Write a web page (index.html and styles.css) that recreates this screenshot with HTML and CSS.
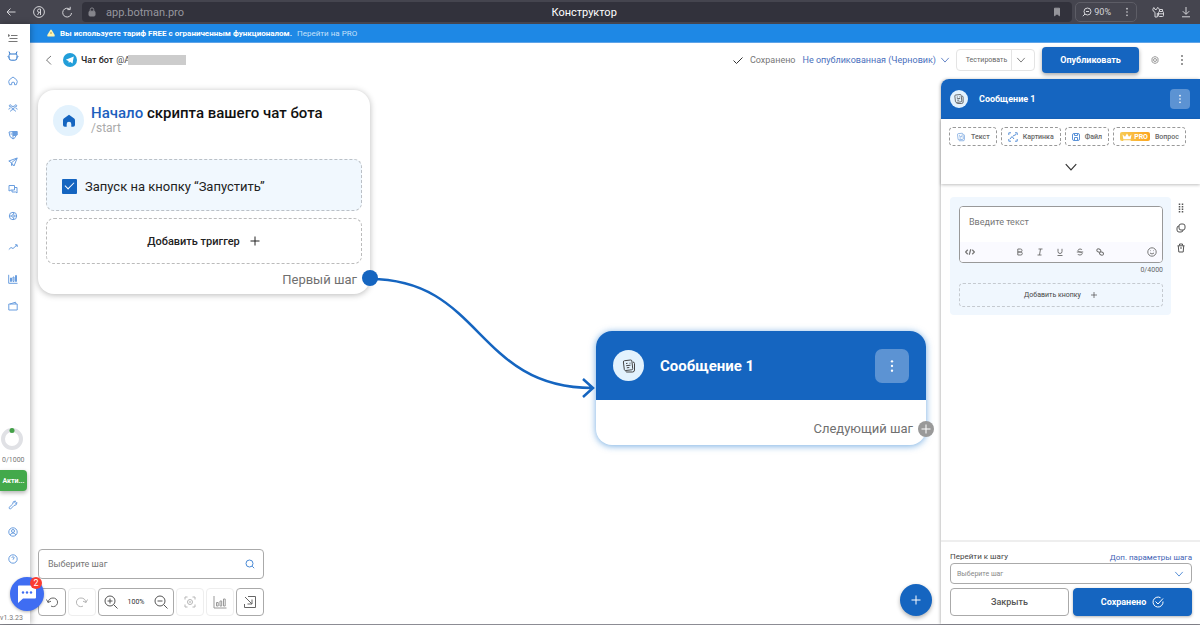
FILE: index.html
```html
<!DOCTYPE html>
<html lang="ru">
<head>
<meta charset="utf-8">
<title>Конструктор</title>
<link rel="stylesheet" href="styles.css">
</head>
<body>
<svg class="sprite" aria-hidden="true">
  <symbol id="i-down" viewBox="0 0 12 12"><path d="M1.500 3.500 6 8.500l4.500-5"/></symbol>
  <symbol id="i-dots" viewBox="0 0 12 12"><g fill="currentColor" stroke="none"><circle cx="6" cy="2" r="1"/><circle cx="6" cy="6" r="1"/><circle cx="6" cy="10" r="1"/></g></symbol>
  <symbol id="i-plus" viewBox="0 0 12 12"><path d="M6 1.500v9M1.500 6h9"/></symbol>
  <symbol id="i-doc" viewBox="0 0 16 16"><path d="M3.500 2.700 9.500 2q1.200-.1 1.400 1l.8 7.500q.1 1.200-1 1.300l-6 .7q-1.200.1-1.400-1L2.400 4q-.1-1.200 1.100-1.300M12 4q1.500.2 1.500 1.500V12q0 2-2 2H6q-1 0-1.500-.8M5 5.500l1.500-.2M8.500 5.200h1M5.200 7.700l4.300-.5M5.800 9.800l2.500-.3"/></symbol>
</svg>

<header class="browser">
  <button class="b-btn" aria-label="Назад"><svg class="ic12" viewBox="0 0 12 12"><path d="M10.500 6H2M5.500 2.500 2 6l3.500 3.500"/></svg></button>
  <button class="b-btn" aria-label="Яндекс"><svg class="ic12" viewBox="0 0 12 12"><circle cx="6" cy="6" r="5.400"/><path d="M7.500 9V3H6Q4.500 3.200 4.500 4.700T6 6.300h1.500M6 6.300 4.500 9"/></svg></button>
  <button class="b-btn" aria-label="Обновить"><svg class="ic12" viewBox="0 0 12 12"><path d="M10.500 7A4.400 4.400 0 1 1 9 3.300M9.200.8v2.800H6.400"/></svg></button>
  <div class="address">
    <svg class="ic10 lock" viewBox="0 0 10 10"><rect x="2" y="4.200" width="6" height="4.800" rx="1" fill="currentColor"/><path d="M3.200 4V2.700a1.800 1.800 0 0 1 3.600 0V4"/></svg>
    <span class="url">app.botman.pro</span>
    <span class="page-title">Конструктор</span>
    <span class="mark"><svg class="ic10" viewBox="0 0 10 10"><path d="M2.500 1.200h5v7.600L5 6.800 2.500 8.800z" fill="currentColor"/></svg></span>
  </div>
  <div class="zoombox">
    <svg class="ic10" viewBox="0 0 10 10"><circle cx="5.500" cy="4.500" r="3.500"/><path d="M3 7 .8 9.200M4 4.500h3"/></svg>
    <span>90%</span>
    <svg class="ic10 more"><use href="#i-dots"/></svg>
  </div>
  <button class="b-btn ext" aria-label="Пароли"><svg class="ic12" viewBox="0 0 12 12"><path d="M3 11V6.300Q.7 5.500.8 3.300L1.800 1.500 3 3.500h1.500l1-2Q7.300 2 7.300 3.700M3 11h2.300V7"/><rect x="6.500" y="5.500" width="5" height="5" rx="1"/><path d="M7.500 5.500v-2h3v2M6.500 7.800h5"/></svg></button>
  <button class="b-btn" aria-label="Загрузки"><svg class="ic12" viewBox="0 0 12 12"><path d="M6 1v7M2.800 5.200 6 8.400l3.200-3.200M2 10.800h8"/></svg></button>
</header>

<div class="app">
  <nav class="sidebar" aria-label="Меню">
    <a class="nav short gray" href="#" aria-label="Свернуть"><svg class="ic10" viewBox="0 0 10 10"><path d="M.5 1.500v2L1.800 2.500zM3 2.500h6.500M1.500 5.500h8M.5 8.500h9"/></svg></a>
    <a class="nav short logo" href="#" aria-label="Botman"><svg class="ic12" viewBox="0 0 12 12"><path d="M2 1.500 3 4h6l1-2.500M3 4Q2 4.300 2 5.500V8q0 2.200 2.200 2.200h3.600Q10 10.200 10 8V5.500Q10 4.300 9 4M2 7.500.8 6.300M10 7.500l1.200-1.200"/></svg></a>
    <a class="nav first" href="#" aria-label="Главная"><svg class="ic10" viewBox="0 0 10 10"><path d="M1.500 3.700 5 1l3.500 2.700.8 2-1 3H6.500v-2Q5 5.500 3.700 6.700v2H1.500l-.8-3z"/></svg></a>
    <a class="nav" href="#" aria-label="Подписчики"><svg class="ic10" viewBox="0 0 10 10"><circle cx="5" cy="4.500" r="1.300"/><circle cx="2.300" cy="2.800" r="1"/><circle cx="7.700" cy="2.800" r="1"/><path d="M2.500 8.500Q3 6.500 5 6.500t2.500 2M.8 6.500Q1 5 2.500 5M9.200 6.500Q9 5 7.500 5"/></svg></a>
    <a class="nav" href="#" aria-label="Защита"><svg class="ic10" viewBox="0 0 10 10"><path d="M1 2 5 1.500V9Q1 7.500 1 2z"/><path d="M5 1.500H9.200V5L7 5.500H5z" fill="currentColor"/><path d="M2.500 4H4M5 9q2.500-1 3-3.500"/></svg></a>
    <a class="nav" href="#" aria-label="Рассылки"><svg class="ic10" viewBox="0 0 10 10"><path d="M9.200 1 .8 4l2.700 1.800L6 9zM9.200 1 3.500 5.800v2.700L5 7.500"/></svg></a>
    <a class="nav" href="#" aria-label="Чаты"><svg class="ic10" viewBox="0 0 10 10"><path d="M1 1.500h5.500V6H3L1 7zM6.500 3.500H9V9L7.800 8H4V6"/></svg></a>
    <a class="nav" href="#" aria-label="Интеграции"><svg class="ic10" viewBox="0 0 10 10"><circle cx="5" cy="5" r="3.700"/><circle cx="5" cy="5" r="1.300"/><path d="M1.300 5h2.400M6.300 5h2.400M5 1.300l1 2M5 8.700l1-2"/></svg></a>
    <a class="nav tall" href="#" aria-label="Тренды"><svg class="ic10" viewBox="0 0 10 10"><path d="M.8 7.500 3 5.500l2 1L9 3M7 2.800h2.200V5"/></svg></a>
    <a class="nav" href="#" aria-label="Статистика"><svg class="ic10" viewBox="0 0 10 10"><path d="M.7.800v8.500h8.800M2.500 7.500V4h1v3.500zM5 7.500V3h1v4.500zM7.500 7.500v-6h1v6z"/></svg></a>
    <a class="nav" href="#" aria-label="Кошелёк"><svg class="ic10" viewBox="0 0 10 10"><path d="M.8 3h8.400v6H.8zM2 3l5.500-1.800L8 3"/></svg></a>

    <svg class="ring" viewBox="0 0 22 22"><circle cx="11" cy="11" r="9" stroke="#e0e1e5" stroke-width="4"/><circle cx="11" cy="2.500" r="2.500" fill="#43a047" stroke="none"/></svg>
    <span class="quota">0/1000</span>
    <button class="activate">Акти...</button>
    <a class="nav" href="#" aria-label="Настройки"><svg class="ic10" viewBox="0 0 10 10"><path d="M1 7.500 4.700 4Q4.500 1 7.500 1L6.700 2.500l1 .8L9 2.500Q9 5.500 6 5.500L2.500 9Q1 9 1 7.500z"/></svg></a>
    <a class="nav" href="#" aria-label="Профиль"><svg class="ic10" viewBox="0 0 10 10"><circle cx="5" cy="5" r="4.200"/><circle cx="5" cy="4" r="1.500"/><path d="M2.300 8q.5-2 2.700-2t2.700 2"/></svg></a>
    <a class="nav" href="#" aria-label="Помощь"><svg class="ic10" viewBox="0 0 10 10"><circle cx="5" cy="5" r="4.200"/><path d="M3.800 3.700Q4 2.800 5 2.800t1.200 1Q6.200 4.600 5 5v.6"/></svg></a>
    <span class="version">v1.3.23</span>
    <button class="chat" aria-label="Открыть чат">
      <svg class="chat-ic" viewBox="0 0 20 20"><path d="M2 1.500h16q1 0 1 1v11q0 1-1 1H6L1 19V2.500q0-1 1-1z" fill="#fff" stroke="none"/><g fill="#3f6df2" stroke="none"><circle cx="6" cy="8.500" r="1.200"/><circle cx="10" cy="8.500" r="1.200"/><circle cx="14" cy="8.500" r="1.200"/></g></svg>
      <span class="badge">2</span>
    </button>
  </nav>

  <div class="main">
    <div class="banner">
      <svg class="ic8" viewBox="0 0 8 8"><path d="M3.300 1Q4 0 4.700 1l3 5Q8 7.500 7 7.500H1Q0 7.500.3 6z" fill="#fff3b0" stroke="none"/><path d="M4 3v2" stroke="#b09a50"/></svg>
      <strong>Вы используете тариф FREE с ограниченным функционалом.</strong>
      <a href="#">Перейти на PRO</a>
    </div>

    <div class="topbar">
      <button class="plain" aria-label="Назад"><svg class="ic12" viewBox="0 0 12 12"><path d="M8 2 3.500 6 8 10.500"/></svg></button>
      <svg class="tg" viewBox="0 0 14 14"><circle cx="7" cy="7" r="7" fill="#229ed9" stroke="none"/><path d="M2.800 6.800 10.800 3.600 9.500 10.500 7 8.800 5.800 10 5.500 8z" fill="#fff" stroke="none"/></svg>
      <h1><b>Чат бот</b> @A<span class="masked"></span></h1>
      <svg class="ic10 ok" viewBox="0 0 10 10"><path d="M.5 5.500 3.500 8.500l6-6"/></svg>
      <span class="state">Сохранено</span>
      <button class="plain version-pick">Не опубликованная (Черновик)<svg class="ic10"><use href="#i-down"/></svg></button>
      <div class="split"><button>Тестировать</button><button aria-label="Ещё"><svg class="ic10"><use href="#i-down"/></svg></button></div>
      <button class="publish">Опубликовать</button>
      <button class="plain gear" aria-label="Настройки"><svg class="ic8" viewBox="0 0 8 8"><path d="m4 .6 1.500.6L7 2.200v3.600l-1.500 1L4 7.400l-1.500-.6L1 5.800V2.200l1.500-1z"/><circle cx="4" cy="4" r="1.500"/></svg></button>
      <button class="plain kebab" aria-label="Меню"><svg class="ic12"><use href="#i-dots"/></svg></button>
    </div>

    <div class="work">
      <main class="canvas">
        <svg class="edge" width="570" height="330" viewBox="0 0 570 330"><path d="M340 200C452 200 446 309 562 309M553 300l10 9-10 9"/></svg>

        <section class="node start">
          <div class="start-head">
            <span class="round"><svg class="home" viewBox="0 0 14 14"><path d="M7 .8 12.200 4.500Q13 5.200 13 6.500V11q0 1.800-1.800 1.800H9.300V10a2.300 2.300 0 0 0-4.600 0v2.800H2.800Q1 12.800 1 11V6.500Q1 5.200 1.800 4.500z" fill="#1565c0" stroke="none"/></svg></span>
            <div><h2><em>Начало</em> скрипта вашего чат бота</h2><p>/start</p></div>
          </div>
          <label class="trigger"><input type="checkbox" checked>Запуск на кнопку “Запустить”</label>
          <button class="add-trigger">Добавить триггер<svg class="ic12"><use href="#i-plus"/></svg></button>
          <div class="next">Первый шаг</div>
          <span class="port"></span>
        </section>

        <section class="node message">
          <div class="msg-head">
            <span class="round"><svg class="ic16"><use href="#i-doc"/></svg></span>
            <h2>Сообщение 1</h2>
            <button class="menu" aria-label="Меню"><svg class="ic14"><use href="#i-dots"/></svg></button>
          </div>
          <div class="next">Следующий шаг</div>
          <span class="port gray"><svg class="ic12"><use href="#i-plus"/></svg></span>
        </section>

        <div class="tools">
          <div class="search"><input type="text" placeholder="Выберите шаг" aria-label="Выберите шаг"><svg class="ic10" viewBox="0 0 10 10"><circle cx="4.500" cy="4.500" r="3.500"/><path d="m7.200 7.200 2 2"/></svg></div>
          <div class="toolrow">
            <button aria-label="Отменить"><svg class="ic14" viewBox="0 0 14 14"><path d="M1.500 4.500 3 7.500l3-1.300M3 7.300Q4 3 8 3a4.300 4.300 0 0 1 .5 8.600Q7 11.700 6 11"/></svg></button>
            <button class="off" aria-label="Повторить"><svg class="ic14" viewBox="0 0 14 14"><path d="M12.500 4.500 11 7.500 8 6.200M11 7.300Q10 3 6 3a4.300 4.300 0 0 0-.5 8.600Q7 11.700 8 11"/></svg></button>
            <div class="scale">
              <button aria-label="Увеличить"><svg class="ic14" viewBox="0 0 14 14"><circle cx="6" cy="6" r="5"/><path d="M9.700 9.700 13.500 13.500M3.500 6h5M6 3.500v5"/></svg></button>
              <span>100%</span>
              <button aria-label="Уменьшить"><svg class="ic14" viewBox="0 0 14 14"><circle cx="6" cy="6" r="5"/><path d="M9.700 9.700 13.500 13.500M3.500 6h5"/></svg></button>
            </div>
            <button class="off" aria-label="По центру"><svg class="ic12" viewBox="0 0 12 12"><path d="M1 3.500V1h2.500M8.500 1H11v2.500M11 8.500V11H8.500M3.500 11H1V8.500"/><circle cx="6" cy="6" r="2.500"/><circle cx="6" cy="6" r=".5"/></svg></button>
            <button class="mid" aria-label="Статистика"><svg class="ic14" viewBox="0 0 14 14"><path d="M1 1v12h12.500M3.500 11V7.500h1.700V11zM7 11V6h1.700v5zM10.500 11V4h1.700v7z"/></svg></button>
            <button aria-label="Свернуть"><svg class="ic14" viewBox="0 0 14 14"><path d="M5 1.500h7.500v11h-11V9M2 2l7 7M9 4.500V9H4.500"/></svg></button>
          </div>
        </div>
        <button class="fab" aria-label="Добавить шаг"><svg class="ic12"><use href="#i-plus"/></svg></button>
      </main>

      <aside class="panel">
        <div class="panel-head">
          <span class="round"><svg class="ic12"><use href="#i-doc"/></svg></span>
          <h2>Сообщение 1</h2>
          <button class="menu" aria-label="Меню"><svg class="ic10"><use href="#i-dots"/></svg></button>
        </div>
        <div class="kinds">
          <div class="kindrow">
            <button><svg class="ic10"><use href="#i-doc"/></svg>Текст</button>
            <button><svg class="ic10" viewBox="0 0 10 10"><path d="M.8 3V.8H3M7 .8h2.200V3M9.200 7v2.200H7M3 9.200H.8V7M2 7l2-2.500L6 7M5 4l3-1.500"/></svg>Картинка</button>
            <button><svg class="ic8" viewBox="0 0 8 8"><rect x=".5" y=".5" width="7" height="7" rx="1.500"/><path d="M2.500.5v2h3v-2M2.500 7.500V4.500h3v3"/></svg>Файл</button>
            <button><span class="pro"><svg class="ic10" viewBox="0 0 10 10"><path d="M.5 2.500 3 4.800 5 1.500l2 3.300 2.500-2.300-.8 4.500H1.300zM1.300 7.800h7.400v1H1.300z" fill="#fff" stroke="none"/></svg>PRO</span>Вопрос</button>
          </div>
          <button class="plain expand" aria-label="Развернуть"><svg class="ic14"><use href="#i-down"/></svg></button>
        </div>
        <div class="content">
          <div class="block">
            <div class="editor">
              <textarea placeholder="Введите текст" aria-label="Введите текст"></textarea>
              <div class="format">
                <button aria-label="Код"><svg class="ic10" viewBox="0 0 8 8"><path d="M2.200 2.200.5 4l1.700 1.800M5.800 2.200 7.500 4 5.800 5.800M4.600 1.800 3.400 6.200"/></svg></button>
                <button class="bold" aria-label="Жирный"><svg class="ic8" viewBox="0 0 8 8"><path d="M1.800 1h2.700Q6 1 6 2.500T4.500 4H1.800zM1.800 4h3q1.500 0 1.500 1.500T4.800 7h-3z"/></svg></button>
                <button aria-label="Курсив"><svg class="ic8" viewBox="0 0 8 8"><path d="M2.500 1h4M1.500 7h4M4.500 1l-1 6"/></svg></button>
                <button aria-label="Подчёркнутый"><svg class="ic8" viewBox="0 0 8 8"><path d="M2 .8v2.700Q2 5.500 4 5.500t2-2V.8M1.500 7.500h5"/></svg></button>
                <button aria-label="Зачёркнутый"><svg class="ic8" viewBox="0 0 8 8"><path d="M6 2Q5.700 1 4 1T2 2.500Q2 4 4 4t2.200 1.500Q6 7 4 7T1.800 6M.8 4h6.400"/></svg></button>
                <button class="link" aria-label="Ссылка"><svg class="ic8" viewBox="0 0 8 8"><rect x=".8" y="1" width="4" height="3" rx="1.500" transform="rotate(30 2.800 2.500)"/><rect x="3.500" y="4" width="4" height="3" rx="1.500" transform="rotate(30 5.500 5.500)"/></svg></button>
                <button class="smile" aria-label="Эмодзи"><svg class="ic10" viewBox="0 0 10 10"><circle cx="5" cy="5" r="4.200"/><path d="M3 6q2 2 4 0M3.500 3.500v.6M6.500 3.500v.6"/></svg></button>
              </div>
            </div>
            <span class="count">0/4000</span>
            <button class="add-button">Добавить кнопку<svg class="ic8"><use href="#i-plus"/></svg></button>
          </div>
          <div class="side">
            <button class="plain" aria-label="Переместить"><svg class="ic10" viewBox="0 0 10 10"><path d="M3.500.5v9M6.500.5v9" stroke-width="1.500" stroke-dasharray="1.500 1"/></svg></button>
            <button class="plain" aria-label="Копировать"><svg class="ic10" viewBox="0 0 10 10"><rect x="3" y="1" width="6" height="6" rx="2"/><path d="M3 3Q1 3 1 5v2q0 2 2 2h2q2 0 2-2"/></svg></button>
            <button class="plain" aria-label="Удалить"><svg class="ic10" viewBox="0 0 10 10"><path d="M1.500 2.800h7M3.500 2.500V1h3v1.500M2.300 3l.5 6h4.400l.5-6M4 5h2"/></svg></button>
          </div>
        </div>
        <div class="foot">
          <div class="footlabels"><label for="goto">Перейти к шагу</label><a href="#">Доп. параметры шага</a></div>
          <div class="selectbox"><select id="goto"><option>Выберите шаг</option></select><svg class="ic10"><use href="#i-down"/></svg></div>
          <div class="actions"><button>Закрыть</button><button class="saved">Сохранено<svg class="ic12" viewBox="0 0 12 12"><path d="M11 5.500A5 5 0 1 1 8.500 1.700M3.500 5.500 6 8l5-5.500"/></svg></button></div>
        </div>
      </aside>
    </div>
  </div>
</div>
</body>
</html>
```
FILE: styles.css
```css
* { box-sizing: border-box; }
body {
  margin: 0;
  height: 100vh;
  display: flex;
  flex-direction: column;
  overflow: hidden;
  font-family: Roboto, "Liberation Sans", sans-serif;
  font-size: 9px;
  color: #222;
  background: #fff;
}
h1, h2, p { margin: 0; font-weight: 400; }
a { text-decoration: none; }
button, input, textarea, select { font: inherit; color: inherit; }
button {
  display: flex;
  align-items: center;
  justify-content: center;
  padding: 0;
  border: 0;
  background: none;
  white-space: nowrap;
}
svg { fill: none; stroke: currentColor; stroke-width: 1; flex: none; }
.sprite { position: absolute; width: 0; height: 0; }
.ic8 { width: 8px; height: 8px; }
.ic10 { width: 10px; height: 10px; }
.ic12 { width: 12px; height: 12px; }
.ic14 { width: 14px; height: 14px; }
.ic16 { width: 16px; height: 16px; }

/* Browser bar */
.browser {
  display: flex;
  align-items: center;
  height: 24px;
  padding: 0 8px 0 5px;
  background: #45454f;
  color: #d5d5d9;
}
.b-btn { width: 12px; margin-right: 16px; }
.b-btn + .address { margin-left: -7px; }
.b-btn:last-child { margin-right: 0; }
.address {
  flex: 1;
  display: flex;
  align-items: center;
  height: 20px;
  padding: 0 10px 0 5px;
  border-radius: 4px;
  background: #32323c;
  font-size: 11px;
}
.lock { color: #85858c; }
.url { flex: 1; padding-left: 9px; color: #96969e; }
.page-title { color: #fff; }
.mark { flex: 1; display: flex; justify-content: flex-end; color: #95959b; }
.zoombox {
  display: flex;
  align-items: center;
  gap: 2px;
  height: 20px;
  margin: 0 15px 0 3px;
  padding: 0 4px 0 6px;
  border: 1px solid #5d5d66;
  border-radius: 5px;
  font-size: 9px;
}
.more { margin-left: 9px; }

.app { flex: 1; display: flex; min-height: 0; border-bottom: 1px solid #8c8c94; }

/* Sidebar */
.sidebar {
  position: relative;
  z-index: 3;
  width: 30px;
  display: flex;
  flex-direction: column;
  padding-top: 5px;
  background: #fff;
  box-shadow: 1px 0 6px rgba(0, 0, 0, .3);
}
.nav { display: flex; align-items: center; height: 27px; padding-left: 8px; color: #6a9edf; }
.short { height: 18px; }
.logo { padding-left: 7px; color: #2b74cb; }
.gray { color: #777; }
.first { margin-top: 2px; }
.tall { height: 36px; }
.ring { width: 22px; height: 22px; margin: auto 0 4px 1px; }
.quota { height: 12px; padding-left: 2px; font-size: 7px; line-height: 12px; color: #777; }
.activate {
  width: 27px;
  height: 21px;
  margin-top: 4px;
  border-radius: 0 4px 4px 0;
  background: #43a94b;
  color: #fff;
  font-size: 7px;
  font-weight: 700;
  box-shadow: 0 2px 4px rgba(0, 0, 0, .3);
}
.version { height: 12px; margin-top: 40px; font-size: 7px; line-height: 12px; color: #777; }
.chat {
  position: absolute;
  left: 10px;
  bottom: 13px;
  width: 34px;
  height: 34px;
  border-radius: 50%;
  background: #3f6df2;
  box-shadow: 0 1px 3px rgba(0, 0, 0, .3);
}
.chat-ic { width: 20px; height: 20px; }
.badge {
  position: absolute;
  top: 0;
  right: 2px;
  width: 12px;
  height: 12px;
  border-radius: 50%;
  background: #fb3b30;
  color: #fff;
  font-size: 9px;
  line-height: 12px;
}

.main { flex: 1; min-width: 0; display: flex; flex-direction: column; }
.banner {
  display: flex;
  align-items: center;
  gap: 5px;
  height: 19px;
  padding-left: 17px;
  background: #1e88e5;
  color: #fff;
  font-size: 8px;
  border-bottom: 1px solid #5fa4e8;
}
.banner a { color: #c5e0fa; }

/* Editor top bar */
.topbar { display: flex; align-items: center; height: 36px; padding: 0 12px 2px 13px; }
.plain { color: #777; }
.tg { width: 14px; height: 14px; margin: 0 4px 0 8px; }
h1 { flex: 1; display: flex; align-items: center; gap: 3px; font-size: 9px; color: #444; }
h1 b { font-weight: 500; color: #222; }
.masked { width: 58px; height: 10px; margin-left: -5px; background: #ccc; }
.ok { color: #333; margin-right: 7px; }
.state { font-size: 9px; color: #777; margin-right: 7px; }
.version-pick { gap: 4px; font-size: 9px; color: #4a70bd; }
.split {
  display: flex;
  height: 22px;
  margin: 0 7px 0 6px;
  border: 1px solid #e4e4e4;
  border-radius: 4px;
  color: #666;
  font-size: 7px;
}
.split button { width: 54px; padding-left: 5px; }
.split button + button { width: 23px; padding: 0 5px 0 0; border-left: 1px solid #e4e4e4; }
.publish {
  width: 97px;
  height: 26px;
  border-radius: 4px;
  background: #1565c0;
  color: #fff;
  font-size: 9px;
  font-weight: 700;
  box-shadow: 0 2px 4px rgba(0, 0, 0, .35);
}
.gear { margin: 0 17px 0 12px; color: #999; }

.work { flex: 1; display: flex; min-height: 0; }

/* Flow canvas */
.canvas { position: relative; flex: 1; min-width: 0; }
.edge { position: absolute; left: 0; top: 0; stroke: #1565c0; stroke-width: 3; }
.edge path { stroke-width: 2.5; }
.node { position: absolute; background: #fff; border-radius: 16px; }
.start {
  left: 8px;
  top: 11px;
  width: 332px;
  padding: 15px 8px 6px;
  box-shadow: 0 1px 6px rgba(0, 0, 0, .28);
}
.start-head { display: flex; gap: 7px; padding-left: 7px; height: 54px; }
.round {
  display: flex;
  align-items: center;
  justify-content: center;
  flex: none;
  width: 31px;
  height: 31px;
  border-radius: 50%;
  background: #e3f2fd;
  color: #444;
}
.home { width: 14px; height: 14px; }
.start h2 { font-size: 15px; line-height: 16px; font-weight: 500; color: #111; white-space: nowrap; }
.start em { font-style: normal; color: #1d5fbe; }
.start p { font-size: 12px; line-height: 14px; color: #aaa; }
.trigger {
  display: flex;
  align-items: center;
  gap: 8px;
  height: 52px;
  padding: 2px 0 0 15px;
  border: 1px dashed #bbc0c6;
  border-radius: 8px;
  background: #f1f8fe;
  font-size: 13px;
}
.trigger input {
  appearance: none;
  width: 15px;
  height: 15px;
  margin: 0;
  border-radius: 1px;
  background: #1565c0;
  display: grid;
  place-items: center;
}
.trigger input::after {
  content: "";
  width: 8px;
  height: 4px;
  margin-bottom: 3px;
  border: solid #fff;
  border-width: 0 0 1px 1px;
  transform: rotate(-45deg);
}
.add-trigger {
  width: 100%;
  height: 46px;
  gap: 9px;
  margin-top: 7px;
  border: 1px dashed #bbb;
  border-radius: 8px;
  font-size: 11px;
  font-weight: 500;
  color: #222;
}
.next { text-align: right; font-size: 13px; line-height: 16px; color: #707070; }
.start .next { margin-top: 8px; padding-right: 5px; }
.port {
  position: absolute;
  right: -8px;
  bottom: 8px;
  width: 16px;
  height: 16px;
  border-radius: 50%;
  background: #1565c0;
}
.port.gray { display: grid; place-items: center; color: #fff; background: #999; }
.message { left: 566px; top: 252px; width: 330px; box-shadow: 0 1px 7px rgba(21, 115, 205, .6); }
.msg-head {
  display: flex;
  align-items: center;
  height: 69px;
  padding: 0 17px;
  border-radius: 16px 16px 0 0;
  background: #1565c0;
}
.msg-head h2 { flex: 1; padding-left: 16px; color: #fff; font-size: 15px; font-weight: 700; }
.menu { width: 34px; height: 34px; border-radius: 7px; background: #5c93d3; color: #fff; }
.message .next { padding: 21px 13px 8px 0; }

.tools { position: absolute; left: 8px; bottom: 8px; display: grid; gap: 9px; }
.search {
  display: flex;
  align-items: center;
  height: 30px;
  padding: 0 8px 0 9px;
  border: 1px solid #aaa;
  border-radius: 4px;
  color: #4a8ad6;
}
.search input { flex: 1; width: 0; padding: 0; border: 0; font-size: 9px; }
::placeholder { color: #777; opacity: 1; }
.toolrow { display: flex; gap: 2px; }
.toolrow > * { width: 28px; height: 28px; border: 1px solid #aaa; border-radius: 4px; color: #666; }
.toolrow > .off { border-color: #eee; color: #b5b5b5; }
.toolrow > .mid { border-color: #eee; color: #999; }
.toolrow .scale { width: 76px; display: flex; align-items: center; justify-content: space-around; font-size: 7px; color: #333; }
.scale svg { color: #555; }
.fab {
  position: absolute;
  right: 9px;
  bottom: 8px;
  width: 32px;
  height: 32px;
  border-radius: 50%;
  background: #1565c0;
  color: #fff;
  box-shadow: 0 2px 4px rgba(0, 0, 0, .3);
}

/* Step panel */
.panel {
  width: 259px;
  display: flex;
  flex-direction: column;
  border-radius: 8px 0 0 0;
  box-shadow: -1px 0 3px rgba(0, 0, 0, .25);
}
.panel-head {
  display: flex;
  align-items: center;
  height: 40px;
  padding: 0 10px 0 9px;
  border-radius: 8px 0 0 0;
  background: #1565c0;
}
.panel .round { width: 18px; height: 18px; }
.panel h2 { flex: 1; padding-left: 11px; color: #fff; font-size: 9px; font-weight: 700; }
.panel .menu { width: 20px; height: 20px; border-radius: 4px; }
.kinds { height: 65px; padding: 8px 8px 0; box-shadow: 0 1px 3px rgba(0, 0, 0, .25); }
.kindrow { display: flex; gap: 4px; }
.kindrow button {
  height: 19px;
  gap: 5px;
  padding: 0 6px;
  border: 1px dashed #999;
  border-radius: 4px;
  font-size: 7px;
  font-weight: 500;
  color: #666;
}
.kindrow svg { color: #5a92d8; }
.pro {
  display: flex;
  align-items: center;
  gap: 2px;
  height: 9px;
  padding: 0 2px;
  border-radius: 2px;
  background: linear-gradient(90deg, #f7cb55, #fca51f);
  color: #fff;
  font-weight: 700;
}
.expand { width: 100%; height: 14px; margin-top: 14px; color: #333; }
.content { flex: 1; display: flex; align-items: flex-start; gap: 5px; padding: 13px 14px 0 9px; }
.block {
  flex: 1;
  min-width: 0;
  display: flex;
  flex-direction: column;
  padding: 9px 8px 8px 9px;
  border-radius: 4px;
  background: #f0f7fe;
}
.editor { border: 1px solid #999; border-radius: 4px; background: #fff; overflow: hidden; }
.editor textarea {
  display: block;
  width: 100%;
  height: 35px;
  padding: 10px 9px 0;
  border: 0;
  resize: none;
  font-size: 9px;
  line-height: 11px;
}
.format { display: flex; align-items: center; gap: 12px; height: 20px; padding: 0 5px; background: #fafaff; color: #777; }
.format .bold { margin-left: 29px; }
.format .smile { margin-left: auto; }
.count { align-self: flex-end; font-size: 7px; line-height: 14px; color: #666; }
.add-button {
  height: 24px;
  gap: 9px;
  margin-top: 6px;
  border: 1px dashed #c5cad0;
  border-radius: 4px;
  font-size: 7px;
  color: #444;
}
.side { display: grid; gap: 10px; padding-top: 6px; }
.side .plain { color: #555; }
.foot { padding: 9px 8px 8px 9px; border-top: 2px solid #eee; }
.footlabels { display: flex; justify-content: space-between; font-size: 8px; line-height: 12px; color: #444; }
.footlabels a { padding-top: 1px; margin-bottom: -1px; color: #3f63b5; }
.selectbox { display: flex; align-items: center; height: 21px; padding: 0 7px 0 6px; border: 1px solid #aaa; border-radius: 4px; color: #3b7dd0; }
.selectbox select { appearance: none; flex: 1; padding: 0; border: 0; background: none; font-size: 7px; color: #888; }
.actions { display: flex; gap: 4px; margin-top: 4px; }
.actions button { flex: 1; height: 28px; gap: 6px; border: 1px solid #aaa; border-radius: 4px; font-size: 9px; font-weight: 500; color: #555; }
.actions .saved { border-color: #1565c0; background: #1565c0; color: #fff; font-weight: 700; box-shadow: 0 1px 3px rgba(0, 0, 0, .3); }
```
